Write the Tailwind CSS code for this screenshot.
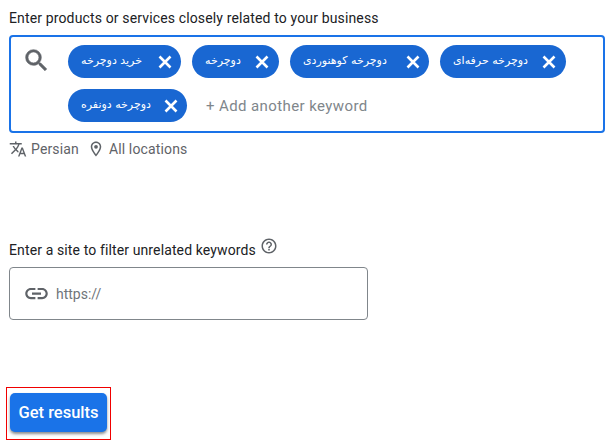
<!DOCTYPE html>
<html lang="en">
<head>
    <meta charset="UTF-8">
    <title>Get results</title>
    <script src="https://cdn.jsdelivr.net/npm/@tailwindcss/browser@4"></script>
</head>
<body class="bg-white h-[442px] w-[615px] overflow-hidden font-['Roboto',sans-serif] text-[#3c4043]">
    <div class="pl-[9px] pt-[10px] w-[605px] flex flex-col">
        <label class="text-[14px] tracking-[0.14px] leading-[16px] h-[25px] text-[#202124]">Enter products or services closely related to your business</label>

        <div class="w-[596px] h-[98px] border-[2px] border-[#1a73e8] rounded-[4px] flex pl-[11px] pt-[8px]">
            <svg class="w-[29px] h-[29px] mt-[1px] text-[#5f6368] shrink-0" viewBox="0 0 24 24" fill="currentColor" stroke="currentColor" stroke-width="0.5"><path d="M15.5 14h-.79l-.28-.27A6.47 6.47 0 0 0 16 9.5 6.5 6.5 0 1 0 9.5 16c1.61 0 3.09-.59 4.23-1.57l.27.28v.79l5 4.99L20.49 19l-4.99-5zm-6 0C7.01 14 5 11.99 5 9.5S7.01 5 9.5 5 14 7.01 14 9.5 11.99 14 9.5 14z"/></svg>
            <div class="flex flex-wrap content-start gap-x-[11px] gap-y-[11px] ml-[17px] w-[520px]">
                <div class="w-[113px] h-[33px] rounded-full bg-[#1967d2] text-white flex items-center pl-[13px] pr-[8px] justify-between">
                    <span dir="rtl" class="text-[11px] font-['DejaVu_Sans',sans-serif]">خرید دوچرخه</span>
                    <svg class="w-[16px] h-[16px]" viewBox="0 0 16 16" stroke="currentColor" stroke-width="2.6" fill="none"><path d="M2.5 2.5l11 11M13.5 2.5l-11 11"/></svg>
                </div>
                <div class="w-[87px] h-[33px] rounded-full bg-[#1967d2] text-white flex items-center pl-[13px] pr-[9px] justify-between">
                    <span dir="rtl" class="text-[11px] font-['DejaVu_Sans',sans-serif]">دوچرخه</span>
                    <svg class="w-[16px] h-[16px]" viewBox="0 0 16 16" stroke="currentColor" stroke-width="2.6" fill="none"><path d="M2.5 2.5l11 11M13.5 2.5l-11 11"/></svg>
                </div>
                <div class="w-[139px] h-[33px] rounded-full bg-[#1967d2] text-white flex items-center pl-[13px] pr-[8px] justify-between">
                    <span dir="rtl" class="text-[11px] font-['DejaVu_Sans',sans-serif]">دوچرخه کوهنوردی</span>
                    <svg class="w-[16px] h-[16px]" viewBox="0 0 16 16" stroke="currentColor" stroke-width="2.6" fill="none"><path d="M2.5 2.5l11 11M13.5 2.5l-11 11"/></svg>
                </div>
                <div class="w-[126px] h-[33px] rounded-full bg-[#1967d2] text-white flex items-center pl-[13px] pr-[9px] justify-between">
                    <span dir="rtl" class="text-[11px] font-['DejaVu_Sans',sans-serif]">دوچرخه حرفه‌ای</span>
                    <svg class="w-[16px] h-[16px]" viewBox="0 0 16 16" stroke="currentColor" stroke-width="2.6" fill="none"><path d="M2.5 2.5l11 11M13.5 2.5l-11 11"/></svg>
                </div>
                <div class="w-[119px] h-[33px] rounded-full bg-[#1967d2] text-white flex items-center pl-[13px] pr-[8px] justify-between">
                    <span dir="rtl" class="text-[11px] font-['DejaVu_Sans',sans-serif]">دوچرخه دونفره</span>
                    <svg class="w-[16px] h-[16px]" viewBox="0 0 16 16" stroke="currentColor" stroke-width="2.6" fill="none"><path d="M2.5 2.5l11 11M13.5 2.5l-11 11"/></svg>
                </div>
                <div class="h-[33px] flex items-center pt-[1px] ml-[8px] text-[15px] tracking-[0.4px] text-[#80868b]">+ Add another keyword</div>
            </div>
        </div>

        <div class="flex items-center h-[18px] mt-[7px] text-[14px] tracking-[0.14px] text-[#5f6368]">
            <svg class="w-[18px] h-[18px] shrink-0" viewBox="0 0 24 24" fill="currentColor"><path d="M12.87 15.07l-2.54-2.51.03-.03A17.52 17.52 0 0 0 14.07 6H17V4h-7V2H8v2H1v1.99h11.17C11.5 7.92 10.44 9.75 9 11.35 8.07 10.32 7.3 9.19 6.69 8h-2c.73 1.63 1.73 3.17 2.98 4.56l-5.09 5.02L4 19l5-5 3.11 3.11.76-2.04zM18.5 10h-2L12 22h2l1.12-3h4.75L21 22h2l-4.5-12zm-2.62 7l1.62-4.33L19.12 17h-3.24z"/></svg>
            <span class="ml-[4px]">Persian</span>
            <svg class="w-[18px] h-[18px] ml-[8px] shrink-0" viewBox="0 0 24 24" fill="currentColor"><path d="M12 2C8.13 2 5 5.13 5 9c0 5.25 7 13 7 13s7-7.75 7-13c0-3.87-3.13-7-7-7zM7 9c0-2.76 2.24-5 5-5s5 2.24 5 5c0 2.88-2.88 7.19-5 9.88C9.92 16.21 7 11.85 7 9z"/><circle cx="12" cy="9" r="2.5"/></svg>
            <span class="ml-[4px]">All locations</span>
        </div>

        <div class="flex items-start mt-[82px] h-[27px]">
            <label class="text-[14px] tracking-[0.12px] leading-[16px] mt-[2px] text-[#202124]">Enter a site to filter unrelated keywords</label>
            <svg class="w-[18px] h-[18px] ml-[4px] -mt-[3px] text-[#5f6368]" viewBox="0 0 24 24" fill="currentColor"><path d="M11 18h2v-2h-2v2zm1-16C6.48 2 2 6.48 2 12s4.48 10 10 10 10-4.48 10-10S17.52 2 12 2zm0 18c-4.41 0-8-3.59-8-8s3.59-8 8-8 8 3.59 8 8-3.59 8-8 8zm0-14c-2.21 0-4 1.79-4 4h2c0-1.1.9-2 2-2s2 .9 2 2c0 2-3 1.75-3 5h2c0-2.25 3-2.5 3-5 0-2.21-1.79-4-4-4z"/></svg>
        </div>

        <div class="w-[359px] h-[53px] border border-[#80868b] rounded-[4px] flex items-center pl-[14px]">
            <svg class="w-[27px] h-[27px] -ml-[1px] text-[#5f6368] shrink-0" viewBox="0 0 24 24" fill="currentColor"><path d="M3.9 12c0-1.71 1.39-3.1 3.1-3.1h4V7H7c-2.76 0-5 2.24-5 5s2.24 5 5 5h4v-1.9H7c-1.71 0-3.1-1.39-3.1-3.1zM8 13h8v-2H8v2zm9-6h-4v1.9h4c1.71 0 3.1 1.39 3.1 3.1s-1.39 3.1-3.1 3.1h-4V17h4c2.76 0 5-2.24 5-5s-2.24-5-5-5z"/></svg>
            <span class="ml-[6px] mt-[1px] text-[14px] text-[#70757a]">https://</span>
        </div>

        <div class="w-[105px] h-[53px] mt-[67px] -ml-[3px] border border-[#f00000] pl-[3px] pt-[5px]">
            <button class="w-[97px] h-[39px] pt-[2px] bg-[#1a73e8] text-white rounded-[5px] text-[16.5px] font-medium font-['Roboto',sans-serif] shadow-[0_2px_3px_rgba(60,64,67,0.6)]">Get results</button>
        </div>
    </div>
</body>
</html>
